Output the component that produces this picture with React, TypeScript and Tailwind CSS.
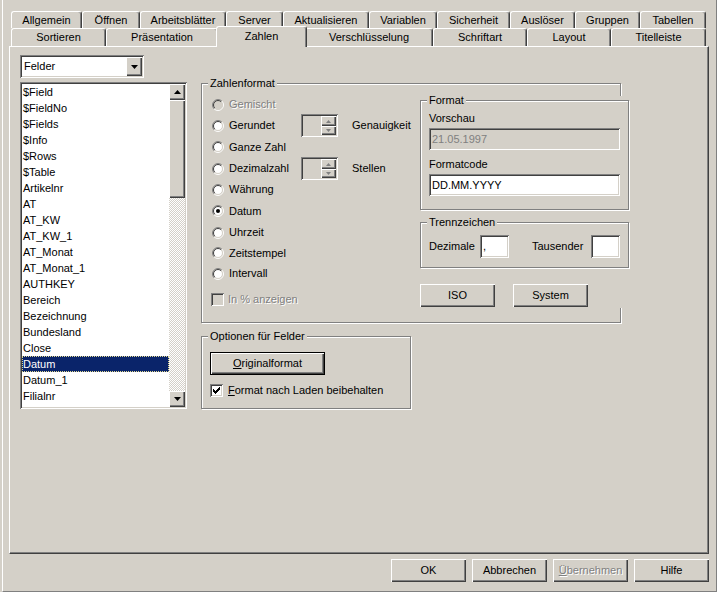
import React from "react";

const raised =
  "shadow-[inset_1px_1px_0_#ffffff,inset_-1px_-1px_0_#404040,inset_-2px_-2px_0_#808080]";
const sunken =
  "shadow-[inset_1px_1px_0_#808080,inset_-1px_-1px_0_#ffffff,inset_2px_2px_0_#404040,inset_-2px_-2px_0_#d4d0c8]";
const etched = "border border-[#808080] shadow-[inset_1px_1px_0_#ffffff,1px_1px_0_#ffffff]";
const disabledText = "text-[#808080] [text-shadow:1px_1px_0_#ffffff]";

const row1: [string, string][] = [
  ["Allgemein", "w-[71px]"],
  ["Öffnen", "w-[58px]"],
  ["Arbeitsblätter", "w-[86px]"],
  ["Server", "w-[57px]"],
  ["Aktualisieren", "w-[86px]"],
  ["Variablen", "w-[68px]"],
  ["Sicherheit", "w-[73px]"],
  ["Auslöser", "w-[65px]"],
  ["Gruppen", "w-[65px]"],
  ["Tabellen", "w-[66px]"],
];

const row2: [string, string, boolean][] = [
  ["Sortieren", "w-[95px]", false],
  ["Präsentation", "w-[112px]", false],
  ["Zahlen", "w-[91px]", true],
  ["Verschlüsselung", "w-[128px]", false],
  ["Schriftart", "w-[94px]", false],
  ["Layout", "w-[84px]", false],
  ["Titelleiste", "w-[95px]", false],
];

const items = [
  "$Field",
  "$FieldNo",
  "$Fields",
  "$Info",
  "$Rows",
  "$Table",
  "Artikelnr",
  "AT",
  "AT_KW",
  "AT_KW_1",
  "AT_Monat",
  "AT_Monat_1",
  "AUTHKEY",
  "Bereich",
  "Bezeichnung",
  "Bundesland",
  "Close",
  "Datum",
  "Datum_1",
  "Filialnr",
  "Filiale",
];

type Row = { label: string; h: string; checked?: boolean; disabled?: boolean; spin?: string };
const rows: Row[] = [
  { label: "Gemischt", h: "h-[21px]", disabled: true },
  { label: "Gerundet", h: "h-[21px]", spin: "Genauigkeit" },
  { label: "Ganze Zahl", h: "h-[22px]" },
  { label: "Dezimalzahl", h: "h-[21px]", spin: "Stellen" },
  { label: "Währung", h: "h-[21px]" },
  { label: "Datum", h: "h-[22px]", checked: true },
  { label: "Uhrzeit", h: "h-[21px]" },
  { label: "Zeitstempel", h: "h-[20px]" },
  { label: "Intervall", h: "h-[21px]" },
];

function Group({
  label,
  className,
  children,
}: {
  label: string;
  className: string;
  children?: React.ReactNode;
}) {
  return (
    <div className={`relative ${etched} ${className}`}>
      <span className="absolute -top-[7px] left-[6px] px-[2px] bg-[#d4d0c8] leading-[13px] whitespace-nowrap">
        {label}
      </span>
      {children}
    </div>
  );
}

function Button({
  children,
  className = "",
  disabled = false,
}: {
  children: React.ReactNode;
  className?: string;
  disabled?: boolean;
}) {
  return (
    <div
      className={`flex items-center justify-center bg-[#d4d0c8] ${raised} ${className} ${
        disabled ? disabledText : ""
      }`}
    >
      {children}
    </div>
  );
}

function Radio({ checked, disabled }: { checked?: boolean; disabled?: boolean }) {
  return (
    <svg width="12" height="12" viewBox="0 0 12 12" className="shrink-0">
      <circle cx="6" cy="6" r="4.5" fill={disabled ? "#d4d0c8" : "#ffffff"} />
      <path d="M2.111 9.889 A5.5 5.5 0 0 1 9.889 2.111" stroke="#808080" fill="none" />
      <path d="M9.889 2.111 A5.5 5.5 0 0 1 2.111 9.889" stroke="#ffffff" fill="none" />
      <path d="M2.818 9.182 A4.5 4.5 0 0 1 9.182 2.818" stroke="#404040" fill="none" />
      <path d="M9.182 2.818 A4.5 4.5 0 0 1 2.818 9.182" stroke="#d4d0c8" fill="none" />
      {checked && <circle cx="6" cy="6" r="2" fill="#000" />}
    </svg>
  );
}

function Check({ checked, disabled }: { checked?: boolean; disabled?: boolean }) {
  return (
    <div
      className={`w-[13px] h-[13px] shrink-0 ${sunken} ${
        disabled ? "bg-[#d4d0c8]" : "bg-white"
      } flex items-center justify-center`}
    >
      {checked && (
        <svg width="7" height="7" viewBox="0 0 7 7">
          <rect x="6" y="0" width="1" height="1" fill="#000" />
          <rect x="5" y="1" width="2" height="1" fill="#000" />
          <rect x="0" y="2" width="1" height="1" fill="#000" />
          <rect x="4" y="2" width="3" height="1" fill="#000" />
          <rect x="0" y="3" width="2" height="1" fill="#000" />
          <rect x="3" y="3" width="3" height="1" fill="#000" />
          <rect x="0" y="4" width="5" height="1" fill="#000" />
          <rect x="1" y="5" width="3" height="1" fill="#000" />
          <rect x="2" y="6" width="1" height="1" fill="#000" />
        </svg>
      )}
    </div>
  );
}

function SmallArrow({ up }: { up?: boolean }) {
  return (
    <svg width="5" height="3" viewBox="0 0 5 3">
      <polygon
        points={up ? "2.5,0 5,3 0,3" : "0,0 5,0 2.5,3"}
        fill="#808080"
        transform="translate(0,0)"
      />
    </svg>
  );
}

function Spin() {
  return (
    <div
      className={`w-[37px] h-[23px] shrink-0 ${sunken} bg-[#d4d0c8] flex justify-end items-center pr-[2px]`}
    >
      <div className="flex flex-col w-[15px] h-[19px]">
        <div className={`h-[10px] bg-[#d4d0c8] ${raised} flex items-center justify-center`}>
          <SmallArrow up />
        </div>
        <div className={`h-[9px] bg-[#d4d0c8] ${raised} flex items-center justify-center`}>
          <SmallArrow />
        </div>
      </div>
    </div>
  );
}

function ArrowBtn({ up }: { up?: boolean }) {
  return (
    <div className={`h-[16px] shrink-0 bg-[#d4d0c8] ${raised} flex items-center justify-center`}>
      <svg width="7" height="4" viewBox="0 0 7 4">
        <polygon points={up ? "3.5,0 7,4 0,4" : "0,0 7,0 3.5,4"} fill="#000" />
      </svg>
    </div>
  );
}

export default function App() {
  return (
    <div className="w-[717px] h-[592px] bg-[#d4d0c8] pl-[2px] overflow-hidden [font-family:'Liberation_Sans',Arial,sans-serif] text-[11px] leading-[13px] text-black select-none">
      <div className="h-full border-l border-l-white border-r border-r-[#808080] border-b border-b-[#808080] pt-[11px] pl-[6px]">
        {/* Tab row 1 */}
        <div className="ml-[2px] flex h-[17px]">
          {row1.map(([l, w]) => (
            <div
              key={l}
              className={`${w} h-[17px] shrink-0 flex items-center justify-center pt-[1px] bg-[#d4d0c8] border-l border-t border-l-white border-t-white border-r border-r-[#404040] rounded-t-[3px] shadow-[inset_-1px_0_0_#808080] whitespace-nowrap`}
            >
              {l}
            </div>
          ))}
        </div>
        {/* Tab row 2 */}
        <div className="ml-[2px] flex h-[18px] items-end">
          {row2.map(([l, w, sel]) => (
            <div
              key={l}
              className={`${w} shrink-0 flex items-center justify-center bg-[#d4d0c8] border-l border-t border-l-white border-t-white border-r border-r-[#404040] rounded-t-[3px] shadow-[inset_-1px_0_0_#808080] whitespace-nowrap ${
                sel ? "relative z-10 h-[21px] -mb-[1px] -mx-[2px] pb-[2px]" : "h-[18px]"
              }`}
            >
              {l}
            </div>
          ))}
        </div>

        {/* Panel */}
        <div className="w-[700px] h-[508px] border-l border-t border-l-white border-t-white border-r border-b border-r-[#404040] border-b-[#404040] shadow-[inset_-1px_-1px_0_#808080] pt-[8px] pl-[10px] flex items-start">
          {/* Left column */}
          <div className="w-[167px] shrink-0 flex flex-col">
            <div className={`w-[124px] h-[23px] bg-white ${sunken} flex items-center`}>
              <span className="flex-1 pl-[4px]">Felder</span>
              <div
                className={`w-[16px] h-[19px] mr-[2px] bg-[#d4d0c8] ${raised} flex items-center justify-center`}
              >
                <svg width="7" height="4" viewBox="0 0 7 4">
                  <polygon points="0,0 7,0 3.5,4" fill="#000" />
                </svg>
              </div>
            </div>
            <div className={`mt-[4px] w-[167px] h-[327px] bg-white ${sunken} p-[2px] flex`}>
              <div className="flex-1 overflow-hidden">
                {items.map((it) => (
                  <div
                    key={it}
                    className={`h-[16px] flex items-center pl-[1px] whitespace-nowrap ${
                      it === "Datum"
                        ? "bg-[#0a246a] text-white outline outline-1 outline-dotted outline-[#e0d890] -outline-offset-1"
                        : ""
                    }`}
                  >
                    {it}
                  </div>
                ))}
              </div>
              <div className="w-[16px] shrink-0 flex flex-col">
                <ArrowBtn up />
                <div className={`h-[98px] shrink-0 bg-[#d4d0c8] ${raised}`} />
                <div className="flex-1 bg-[image:repeating-conic-gradient(#ffffff_0%_25%,#d4d0c8_0%_50%)] bg-[length:2px_2px]" />
                <ArrowBtn />
              </div>
            </div>
          </div>

          {/* Middle */}
          <div className="ml-[14px] mt-[28px] flex flex-col">
            <Group label="Zahlenformat" className="w-[420px] h-[240px] flex items-start">
              <div className="w-[216px] shrink-0 pl-[10px] mt-[10px] flex flex-col">
                {rows.map((r) => (
                  <div key={r.label} className={`${r.h} flex items-center`}>
                    <Radio checked={r.checked} disabled={r.disabled} />
                    <span
                      className={`ml-[5px] w-[72px] shrink-0 whitespace-nowrap ${
                        r.disabled ? disabledText : ""
                      }`}
                    >
                      {r.label}
                    </span>
                    {r.spin && (
                      <>
                        <Spin />
                        <span className="ml-[14px] whitespace-nowrap">{r.spin}</span>
                      </>
                    )}
                  </div>
                ))}
                <div className="mt-[5px] h-[21px] flex items-center -ml-[1px]">
                  <Check disabled />
                  <span className={`ml-[4px] whitespace-nowrap ${disabledText}`}>In % anzeigen</span>
                </div>
              </div>

              <div className="w-[212px] shrink-0 mt-[12px] pb-[1px] bg-[#d4d0c8] flex flex-col">
                <Group label="Format" className="ml-[2px] mt-[4px] w-[209px] h-[110px] px-[8px] pt-[11px] flex flex-col">
                  <div className="h-[13px]">Vorschau</div>
                  <div
                    className={`mt-[3px] h-[22px] bg-[#d4d0c8] ${sunken} flex items-center pl-[3px] text-[#808080]`}
                  >
                    21.05.1997
                  </div>
                  <div className="mt-[8px] h-[13px]">Formatcode</div>
                  <div className={`mt-[3px] h-[22px] bg-white ${sunken} flex items-center pl-[3px]`}>
                    DD.MM.YYYY
                  </div>
                </Group>

                <Group label="Trennzeichen" className="ml-[2px] mt-[12px] w-[209px] h-[46px] px-[8px] pt-[12px]">
                  <div className="h-[23px] flex items-center">
                    <span className="w-[51px] shrink-0">Dezimale</span>
                    <div className={`w-[29px] h-[23px] shrink-0 bg-white ${sunken} flex items-center pl-[3px]`}>
                      ,
                    </div>
                    <span className="ml-[23px] w-[59px] shrink-0">Tausender</span>
                    <div className={`w-[29px] h-[23px] shrink-0 bg-white ${sunken}`} />
                  </div>
                </Group>

                <div className="ml-[2px] mt-[16px] flex gap-[18px]">
                  <Button className="w-[75px] h-[23px]">ISO</Button>
                  <Button className="w-[75px] h-[23px]">System</Button>
                </div>
              </div>
            </Group>

            <Group label="Optionen für Felder" className="mt-[13px] w-[210px] h-[73px] pl-[8px] pt-[15px] flex flex-col">
              <div className="w-[115px] h-[23px] border border-black">
                <Button className="w-full h-full">
                  <span>
                    <span className="underline">O</span>riginalformat
                  </span>
                </Button>
              </div>
              <div className="mt-[9px] flex items-center">
                <Check checked />
                <span className="ml-[5px] whitespace-nowrap">
                  <span className="underline">F</span>ormat nach Laden beibehalten
                </span>
              </div>
            </Group>
          </div>
        </div>

        {/* Bottom buttons */}
        <div className="w-[700px] mt-[5px] flex justify-end gap-[6px]">
          <Button className="w-[75px] h-[23px]">OK</Button>
          <Button className="w-[75px] h-[23px]">Abbrechen</Button>
          <Button className="w-[75px] h-[23px]" disabled>
            <span>
              <span className="underline">Ü</span>bernehmen
            </span>
          </Button>
          <Button className="w-[75px] h-[23px]">Hilfe</Button>
        </div>
      </div>
    </div>
  );
}
